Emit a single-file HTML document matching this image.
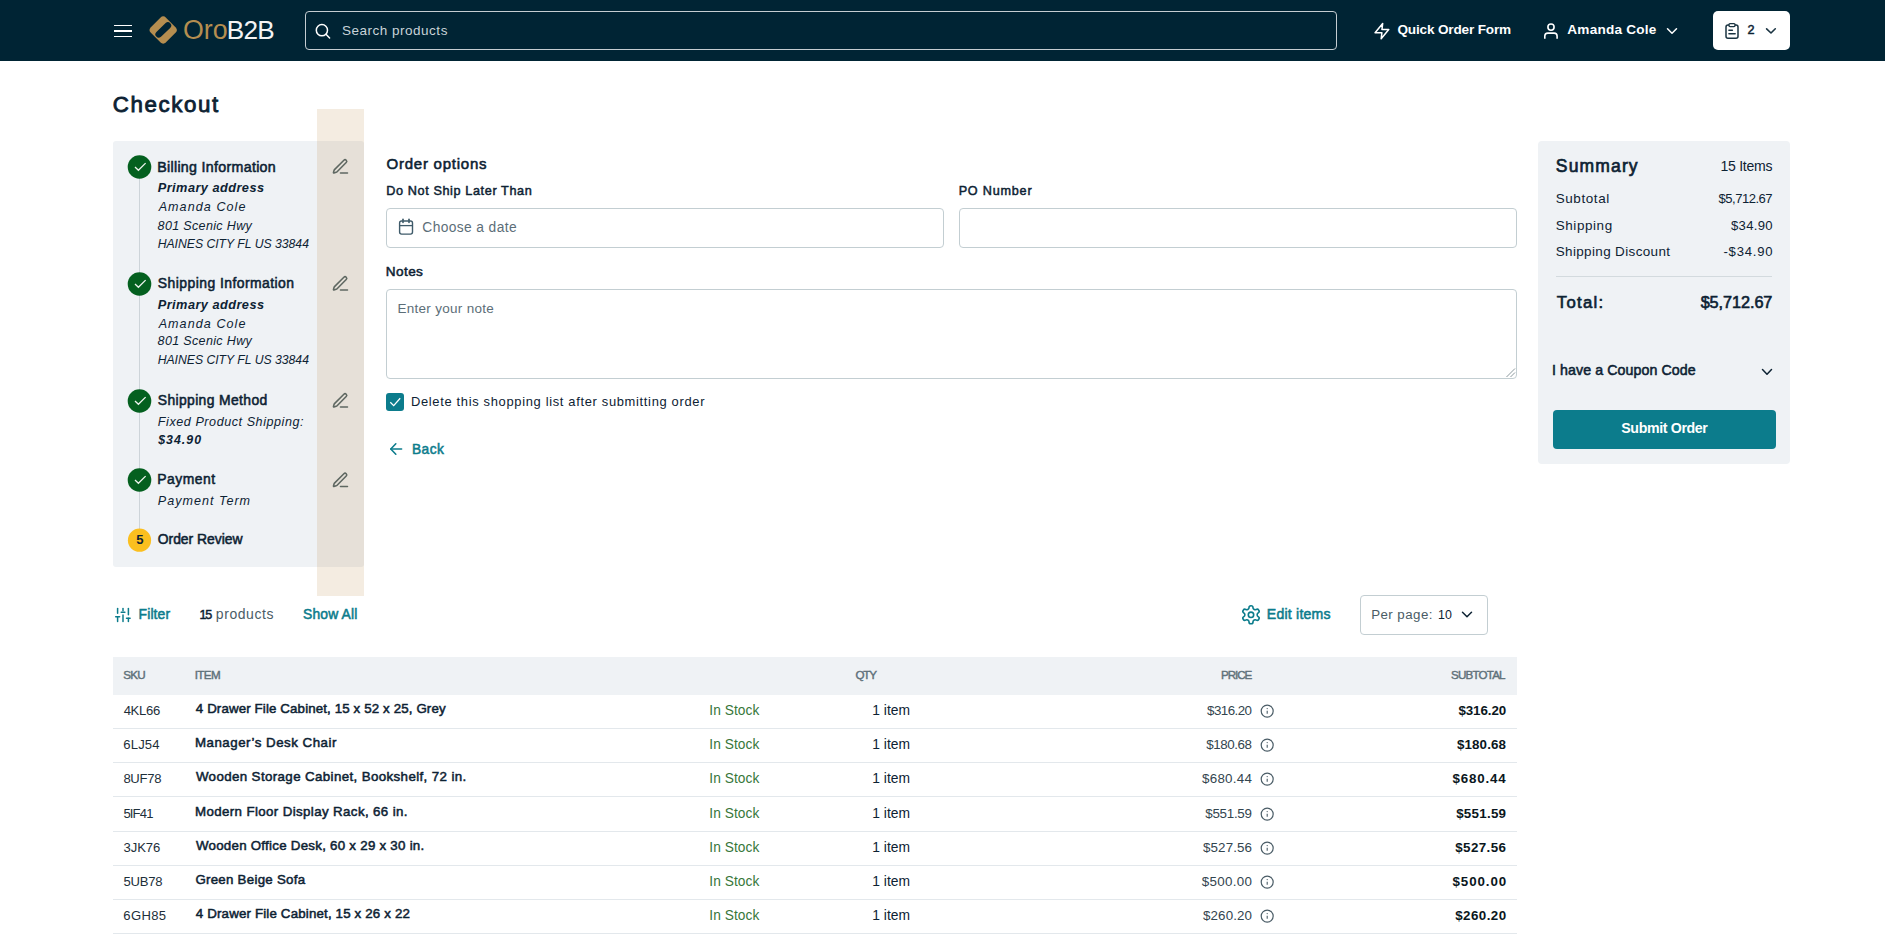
<!DOCTYPE html>
<html><head><meta charset="utf-8"><title>Checkout</title>
<style>
html,body{margin:0;padding:0;background:#fff;}
body{width:1885px;height:944px;overflow:hidden;position:relative;font-family:"Liberation Sans",sans-serif;}
.t{position:absolute;white-space:pre;}
</style></head><body>
<div style="position:absolute;left:0px;top:0px;width:1885px;height:61px;background:#002434;"></div>
<div style="position:absolute;left:114px;top:24.6px;width:18px;height:1.5px;background:#fff;"></div>
<div style="position:absolute;left:114px;top:30.2px;width:18px;height:1.5px;background:#fff;"></div>
<div style="position:absolute;left:114px;top:35.8px;width:18px;height:1.5px;background:#fff;"></div>
<div style="position:absolute;left:305px;top:11px;width:1032px;height:39px;border:1px solid #c5cdd2;border-radius:4px;box-sizing:border-box;"></div>
<div style="position:absolute;left:1713px;top:11px;width:77px;height:39px;background:#fff;border-radius:5px;"></div>
<div style="position:absolute;left:113px;top:141px;width:251px;height:425.5px;background:#eff2f5;border-radius:3px;"></div>
<div style="position:absolute;left:139px;top:178px;width:1px;height:351px;background:#cdd4d9;"></div>
<div style="position:absolute;left:386px;top:208px;width:558px;height:40px;border:1px solid #c3ced2;border-radius:4px;box-sizing:border-box;"></div>
<div style="position:absolute;left:959px;top:208px;width:558px;height:40px;border:1px solid #c3ced2;border-radius:4px;box-sizing:border-box;"></div>
<div style="position:absolute;left:386px;top:289px;width:1131px;height:90px;border:1px solid #c3ced2;border-radius:4px;box-sizing:border-box;"></div>
<div style="position:absolute;left:386px;top:393px;width:18px;height:18px;background:#0c7c8c;border-radius:3px;"></div>
<div style="position:absolute;left:1538px;top:141px;width:252px;height:323px;background:#eff2f5;border-radius:4px;"></div>
<div style="position:absolute;left:1556px;top:276px;width:216px;height:1px;background:#d3dade;"></div>
<div style="position:absolute;left:1553px;top:410px;width:223px;height:39px;background:#0c7c8c;border-radius:4px;"></div>
<div style="position:absolute;left:1360px;top:595px;width:128px;height:40px;border:1px solid #c3ced2;border-radius:4px;box-sizing:border-box;"></div>
<div style="position:absolute;left:113px;top:657px;width:1404px;height:38px;background:#eff2f5;"></div>
<div style="position:absolute;left:113px;top:728px;width:1404px;height:1px;background:#e3e8ec;"></div>
<div style="position:absolute;left:113px;top:762px;width:1404px;height:1px;background:#e3e8ec;"></div>
<div style="position:absolute;left:113px;top:796px;width:1404px;height:1px;background:#e3e8ec;"></div>
<div style="position:absolute;left:113px;top:831px;width:1404px;height:1px;background:#e3e8ec;"></div>
<div style="position:absolute;left:113px;top:865px;width:1404px;height:1px;background:#e3e8ec;"></div>
<div style="position:absolute;left:113px;top:899px;width:1404px;height:1px;background:#e3e8ec;"></div>
<div style="position:absolute;left:113px;top:933px;width:1404px;height:1px;background:#e3e8ec;"></div>
<svg style="position:absolute;left:0;top:0" width="1885" height="944" viewBox="0 0 1885 944"><g transform="translate(163.2,30) rotate(45)"><rect x="-10.7" y="-10.7" width="21.4" height="21.4" rx="4" fill="#b58e50"/></g><line x1="158.7" y1="34.3" x2="167.9" y2="25.5" stroke="#002434" stroke-width="6.6" stroke-linecap="round"/><circle cx="321.9" cy="30.2" r="5.6" fill="none" stroke="#fff" stroke-width="1.5"/><line x1="326" y1="34.3" x2="329.6" y2="38" stroke="#fff" stroke-width="1.5" stroke-linecap="round"/><g transform="translate(1372.8,22) scale(0.76)"><polygon points="13 2 3 14 12 14 11 22 21 10 12 10 13 2" fill="none" stroke="#fff" stroke-width="2" stroke-linejoin="round"/></g><circle cx="1551" cy="27.1" r="3.1" fill="none" stroke="#fff" stroke-width="1.6"/><path d="M1544.8 38.7V36.1A3 3 0 0 1 1547.8 33.1H1554.1A3 3 0 0 1 1557.1 36.1V38.7" fill="none" stroke="#fff" stroke-width="1.6"/><polyline points="1667.5,28.7 1672,33.2 1676.5,28.7" fill="none" stroke="#fff" stroke-width="1.5" stroke-linecap="round" stroke-linejoin="round"/><rect x="1726" y="24.9" width="12" height="13.3" rx="2" fill="none" stroke="#1b3442" stroke-width="1.5"/><rect x="1729" y="23.6" width="6" height="3" rx="1" fill="#fff" stroke="#1b3442" stroke-width="1.4"/><line x1="1728.9" y1="30.3" x2="1732.4" y2="30.3" stroke="#1b3442" stroke-width="1.4" stroke-linecap="round"/><line x1="1728.9" y1="33.8" x2="1735.2" y2="33.8" stroke="#1b3442" stroke-width="1.4" stroke-linecap="round"/><polyline points="1766.6,28.8 1771,33 1775.3,28.8" fill="none" stroke="#1b3442" stroke-width="1.6" stroke-linecap="round" stroke-linejoin="round"/><circle cx="139.5" cy="167" r="11.8" fill="#04601f"/><polyline points="135,167 138.4,170.3 145.6,163.1" fill="none" stroke="#eef3ee" stroke-width="1.3"/><circle cx="139.5" cy="284" r="11.8" fill="#04601f"/><polyline points="135,284 138.4,287.3 145.6,280.1" fill="none" stroke="#eef3ee" stroke-width="1.3"/><circle cx="139.5" cy="401" r="11.8" fill="#04601f"/><polyline points="135,401 138.4,404.3 145.6,397.1" fill="none" stroke="#eef3ee" stroke-width="1.3"/><circle cx="139.5" cy="480" r="11.8" fill="#04601f"/><polyline points="135,480 138.4,483.3 145.6,476.1" fill="none" stroke="#eef3ee" stroke-width="1.3"/><circle cx="139.5" cy="540.2" r="11.6" fill="#fbbf1f"/><g transform="translate(331.1,157.4) scale(0.78)"><path d="M12 20h9" fill="none" stroke="#55686e" stroke-width="2" stroke-linecap="round"/><path d="M16.376 3.622a1 1 0 0 1 3.002 3.002L7.368 18.635a2 2 0 0 1-.855.506l-2.872.838a.5.5 0 0 1-.62-.62l.838-2.872a2 2 0 0 1 .506-.854z" fill="none" stroke="#55686e" stroke-width="2" stroke-linejoin="round"/></g><g transform="translate(331.1,274.4) scale(0.78)"><path d="M12 20h9" fill="none" stroke="#55686e" stroke-width="2" stroke-linecap="round"/><path d="M16.376 3.622a1 1 0 0 1 3.002 3.002L7.368 18.635a2 2 0 0 1-.855.506l-2.872.838a.5.5 0 0 1-.62-.62l.838-2.872a2 2 0 0 1 .506-.854z" fill="none" stroke="#55686e" stroke-width="2" stroke-linejoin="round"/></g><g transform="translate(331.1,391.4) scale(0.78)"><path d="M12 20h9" fill="none" stroke="#55686e" stroke-width="2" stroke-linecap="round"/><path d="M16.376 3.622a1 1 0 0 1 3.002 3.002L7.368 18.635a2 2 0 0 1-.855.506l-2.872.838a.5.5 0 0 1-.62-.62l.838-2.872a2 2 0 0 1 .506-.854z" fill="none" stroke="#55686e" stroke-width="2" stroke-linejoin="round"/></g><g transform="translate(331.1,470.9) scale(0.78)"><path d="M12 20h9" fill="none" stroke="#55686e" stroke-width="2" stroke-linecap="round"/><path d="M16.376 3.622a1 1 0 0 1 3.002 3.002L7.368 18.635a2 2 0 0 1-.855.506l-2.872.838a.5.5 0 0 1-.62-.62l.838-2.872a2 2 0 0 1 .506-.854z" fill="none" stroke="#55686e" stroke-width="2" stroke-linejoin="round"/></g><rect x="399.6" y="221" width="12.9" height="13.1" rx="2" fill="none" stroke="#3f5b6a" stroke-width="1.4"/><line x1="399.6" y1="225.6" x2="412.5" y2="225.6" stroke="#3f5b6a" stroke-width="1.3"/><line x1="403" y1="219.3" x2="403" y2="222.5" stroke="#3f5b6a" stroke-width="1.6" stroke-linecap="round"/><line x1="409" y1="219.3" x2="409" y2="222.5" stroke="#3f5b6a" stroke-width="1.6" stroke-linecap="round"/><line x1="1506.5" y1="377" x2="1515" y2="368.5" stroke="#7d8c92" stroke-width="0.9"/><line x1="1510.5" y1="377" x2="1515" y2="372.5" stroke="#7d8c92" stroke-width="0.9"/><polyline points="390.3,402.3 393.7,405.6 400.2,398.3" fill="none" stroke="#fff" stroke-width="1.3"/><line x1="390.8" y1="449" x2="401.6" y2="449" stroke="#0c7c8c" stroke-width="1.6" stroke-linecap="round"/><polyline points="395.8,443.8 390.8,449 395.8,454.2" fill="none" stroke="#0c7c8c" stroke-width="1.6" stroke-linecap="round" stroke-linejoin="round"/><polyline points="1762.5,369.6 1767,374.2 1771.5,369.6" fill="none" stroke="#0d2233" stroke-width="1.5" stroke-linecap="round" stroke-linejoin="round"/><g fill="none" stroke="#0c7c8c" stroke-width="1.5" stroke-linecap="round"><line x1="117.6" y1="608.6" x2="117.6" y2="613.3"/><line x1="115.7" y1="616.8" x2="119.6" y2="616.8"/><line x1="117.6" y1="616.8" x2="117.6" y2="621.5"/><line x1="123" y1="608.6" x2="123" y2="610.8"/><line x1="121.2" y1="612.2" x2="124.9" y2="612.2"/><line x1="123" y1="614.9" x2="123" y2="621.5"/><line x1="128.4" y1="608.6" x2="128.4" y2="614.8"/><line x1="126.5" y1="618.2" x2="130.1" y2="618.2"/><line x1="128.4" y1="618.2" x2="128.4" y2="621.5"/></g><g transform="translate(1240.2,604) scale(0.9)" fill="none" stroke="#0c7c8c" stroke-width="1.8" stroke-linecap="round" stroke-linejoin="round"><path d="M12.22 2h-.44a2 2 0 0 0-2 2v.18a2 2 0 0 1-1 1.73l-.43.25a2 2 0 0 1-2 0l-.15-.08a2 2 0 0 0-2.73.73l-.22.38a2 2 0 0 0 .73 2.73l.15.1a2 2 0 0 1 1 1.72v.51a2 2 0 0 1-1 1.74l-.15.09a2 2 0 0 0-.73 2.73l.22.38a2 2 0 0 0 2.73.73l.15-.08a2 2 0 0 1 2 0l.43.25a2 2 0 0 1 1 1.73V20a2 2 0 0 0 2 2h.44a2 2 0 0 0 2-2v-.18a2 2 0 0 1 1-1.73l.43-.25a2 2 0 0 1 2 0l.15.08a2 2 0 0 0 2.73-.73l.22-.39a2 2 0 0 0-.73-2.73l-.15-.08a2 2 0 0 1-1-1.74v-.5a2 2 0 0 1 1-1.74l.15-.09a2 2 0 0 0 .73-2.73l-.22-.38a2 2 0 0 0-2.73-.73l-.15.08a2 2 0 0 1-2 0l-.43-.25a2 2 0 0 1-1-1.73V4a2 2 0 0 0-2-2z"/><circle cx="12" cy="12" r="3"/></g><polyline points="1462.5,612.3 1467,616.8 1471.5,612.3" fill="none" stroke="#0d2233" stroke-width="1.5" stroke-linecap="round" stroke-linejoin="round"/><circle cx="1267.2" cy="711.1" r="6" fill="none" stroke="#4a5c66" stroke-width="1.2"/><line x1="1267.2" y1="710.7" x2="1267.2" y2="713.8000000000001" stroke="#4a5c66" stroke-width="1.1"/><circle cx="1267.2" cy="708.6" r="0.65" fill="#4a5c66"/><circle cx="1267.2" cy="745.1" r="6" fill="none" stroke="#4a5c66" stroke-width="1.2"/><line x1="1267.2" y1="744.7" x2="1267.2" y2="747.8000000000001" stroke="#4a5c66" stroke-width="1.1"/><circle cx="1267.2" cy="742.6" r="0.65" fill="#4a5c66"/><circle cx="1267.2" cy="779.1" r="6" fill="none" stroke="#4a5c66" stroke-width="1.2"/><line x1="1267.2" y1="778.7" x2="1267.2" y2="781.8000000000001" stroke="#4a5c66" stroke-width="1.1"/><circle cx="1267.2" cy="776.6" r="0.65" fill="#4a5c66"/><circle cx="1267.2" cy="814.1" r="6" fill="none" stroke="#4a5c66" stroke-width="1.2"/><line x1="1267.2" y1="813.7" x2="1267.2" y2="816.8000000000001" stroke="#4a5c66" stroke-width="1.1"/><circle cx="1267.2" cy="811.6" r="0.65" fill="#4a5c66"/><circle cx="1267.2" cy="848.1" r="6" fill="none" stroke="#4a5c66" stroke-width="1.2"/><line x1="1267.2" y1="847.7" x2="1267.2" y2="850.8000000000001" stroke="#4a5c66" stroke-width="1.1"/><circle cx="1267.2" cy="845.6" r="0.65" fill="#4a5c66"/><circle cx="1267.2" cy="882.1" r="6" fill="none" stroke="#4a5c66" stroke-width="1.2"/><line x1="1267.2" y1="881.7" x2="1267.2" y2="884.8000000000001" stroke="#4a5c66" stroke-width="1.1"/><circle cx="1267.2" cy="879.6" r="0.65" fill="#4a5c66"/><circle cx="1267.2" cy="916.1" r="6" fill="none" stroke="#4a5c66" stroke-width="1.2"/><line x1="1267.2" y1="915.7" x2="1267.2" y2="918.8000000000001" stroke="#4a5c66" stroke-width="1.1"/><circle cx="1267.2" cy="913.6" r="0.65" fill="#4a5c66"/></svg>
<div class="t" style="left:183.06px;top:16.64px;font-size:26.77px;line-height:26.77px;letter-spacing:-0.067px;color:#b58e50;">Oro</div>
<div class="t" style="left:226.81px;top:17.15px;font-size:26.16px;line-height:26.16px;letter-spacing:-0.723px;color:#f4f4f4;">B2B</div>
<div class="t" style="left:342.02px;top:23.57px;font-size:13.51px;line-height:13.51px;letter-spacing:0.504px;color:#c9d3d8;">Search products</div>
<div class="t" style="left:1397.46px;top:22.50px;font-size:13.59px;line-height:13.59px;font-weight:700;letter-spacing:-0.165px;color:#ffffff;">Quick Order Form</div>
<div class="t" style="left:1567.29px;top:22.59px;font-size:13.60px;line-height:13.60px;font-weight:700;letter-spacing:0.223px;color:#ffffff;">Amanda Cole</div>
<div class="t" style="left:1747.61px;top:24.00px;font-size:12.65px;line-height:12.65px;-webkit-text-stroke:0.481px #0d2233;color:#0d2233;">2</div>
<div class="t" style="left:112.81px;top:94.12px;font-size:22.30px;line-height:22.30px;-webkit-text-stroke:0.847px #0d2233;letter-spacing:1.595px;color:#0d2233;">Checkout</div>
<div class="t" style="left:136.21px;top:532.93px;font-size:13.08px;line-height:13.08px;font-weight:700;color:#0d2233;">5</div>
<div class="t" style="left:157.23px;top:160.45px;font-size:14.24px;line-height:14.24px;-webkit-text-stroke:0.541px #0d2233;letter-spacing:0.300px;color:#0d2233;">Billing Information</div>
<div class="t" style="left:157.74px;top:182.20px;font-size:12.76px;line-height:12.76px;font-weight:700;font-style:italic;letter-spacing:0.454px;color:#0d2233;">Primary address</div>
<div class="t" style="left:158.63px;top:201.28px;font-size:12.55px;line-height:12.55px;font-style:italic;letter-spacing:1.081px;color:#0d2233;">Amanda Cole</div>
<div class="t" style="left:157.62px;top:220.28px;font-size:12.54px;line-height:12.54px;font-style:italic;letter-spacing:0.333px;color:#0d2233;">801 Scenic Hwy</div>
<div class="t" style="left:157.63px;top:238.46px;font-size:12.21px;line-height:12.21px;font-style:italic;letter-spacing:-0.008px;color:#0d2233;">HAINES CITY FL US 33844</div>
<div class="t" style="left:157.87px;top:277.20px;font-size:13.94px;line-height:13.94px;-webkit-text-stroke:0.53px #0d2233;letter-spacing:0.440px;color:#0d2233;">Shipping Information</div>
<div class="t" style="left:157.74px;top:298.90px;font-size:12.76px;line-height:12.76px;font-weight:700;font-style:italic;letter-spacing:0.454px;color:#0d2233;">Primary address</div>
<div class="t" style="left:158.63px;top:318.08px;font-size:12.55px;line-height:12.55px;font-style:italic;letter-spacing:1.081px;color:#0d2233;">Amanda Cole</div>
<div class="t" style="left:157.62px;top:334.78px;font-size:12.54px;line-height:12.54px;font-style:italic;letter-spacing:0.333px;color:#0d2233;">801 Scenic Hwy</div>
<div class="t" style="left:157.63px;top:353.96px;font-size:12.21px;line-height:12.21px;font-style:italic;letter-spacing:-0.008px;color:#0d2233;">HAINES CITY FL US 33844</div>
<div class="t" style="left:157.77px;top:394.01px;font-size:13.92px;line-height:13.92px;-webkit-text-stroke:0.529px #0d2233;letter-spacing:0.363px;color:#0d2233;">Shipping Method</div>
<div class="t" style="left:157.82px;top:416.36px;font-size:12.57px;line-height:12.57px;font-style:italic;letter-spacing:0.562px;color:#0d2233;">Fixed Product Shipping:</div>
<div class="t" style="left:158.20px;top:433.94px;font-size:12.35px;line-height:12.35px;font-weight:700;font-style:italic;letter-spacing:1.024px;color:#0d2233;">$34.90</div>
<div class="t" style="left:157.35px;top:473.21px;font-size:13.92px;line-height:13.92px;-webkit-text-stroke:0.529px #0d2233;letter-spacing:0.488px;color:#0d2233;">Payment</div>
<div class="t" style="left:157.82px;top:495.07px;font-size:12.56px;line-height:12.56px;font-style:italic;letter-spacing:1.013px;color:#0d2233;">Payment Term</div>
<div class="t" style="left:157.77px;top:533.23px;font-size:13.90px;line-height:13.90px;-webkit-text-stroke:0.528px #0d2233;letter-spacing:-0.017px;color:#0d2233;">Order Review</div>
<div class="t" style="left:386.53px;top:156.20px;font-size:15.00px;line-height:15.00px;-webkit-text-stroke:0.57px #0d2233;letter-spacing:0.764px;color:#0d2233;">Order options</div>
<div class="t" style="left:386.23px;top:185.18px;font-size:12.67px;line-height:12.67px;-webkit-text-stroke:0.481px #0d2233;letter-spacing:0.612px;color:#0d2233;">Do Not Ship Later Than</div>
<div class="t" style="left:958.63px;top:185.21px;font-size:12.62px;line-height:12.62px;-webkit-text-stroke:0.48px #0d2233;letter-spacing:0.803px;color:#0d2233;">PO Number</div>
<div class="t" style="left:422.31px;top:220.52px;font-size:13.80px;line-height:13.80px;letter-spacing:0.380px;color:#5c6e78;">Choose a date</div>
<div class="t" style="left:385.87px;top:264.69px;font-size:13.60px;line-height:13.60px;-webkit-text-stroke:0.517px #0d2233;letter-spacing:0.373px;color:#0d2233;">Notes</div>
<div class="t" style="left:397.42px;top:301.67px;font-size:13.50px;line-height:13.50px;letter-spacing:0.292px;color:#5c6e78;">Enter your note</div>
<div class="t" style="left:410.97px;top:396.26px;font-size:12.93px;line-height:12.93px;letter-spacing:0.666px;color:#0d2233;">Delete this shopping list after submitting order</div>
<div class="t" style="left:412.06px;top:442.88px;font-size:13.72px;line-height:13.72px;-webkit-text-stroke:0.521px #0c7c8c;letter-spacing:0.404px;color:#0c7c8c;">Back</div>
<div class="t" style="left:1555.86px;top:158.37px;font-size:17.52px;line-height:17.52px;-webkit-text-stroke:0.666px #0d2233;letter-spacing:1.136px;color:#0d2233;">Summary</div>
<div class="t" style="left:1720.48px;top:159.31px;font-size:14.05px;line-height:14.05px;letter-spacing:-0.264px;color:#0d2233;">15 Items</div>
<div class="t" style="left:1555.73px;top:191.79px;font-size:13.48px;line-height:13.48px;letter-spacing:0.591px;color:#0d2233;">Subtotal</div>
<div class="t" style="left:1718.57px;top:192.13px;font-size:13.08px;line-height:13.08px;letter-spacing:-0.516px;color:#0d2233;">$5,712.67</div>
<div class="t" style="left:1555.73px;top:218.59px;font-size:13.48px;line-height:13.48px;letter-spacing:0.577px;color:#0d2233;">Shipping</div>
<div class="t" style="left:1731.07px;top:218.93px;font-size:13.08px;line-height:13.08px;letter-spacing:0.285px;color:#0d2233;">$34.90</div>
<div class="t" style="left:1555.73px;top:244.59px;font-size:13.48px;line-height:13.48px;letter-spacing:0.359px;color:#0d2233;">Shipping Discount</div>
<div class="t" style="left:1723.48px;top:244.93px;font-size:13.08px;line-height:13.08px;letter-spacing:0.783px;color:#0d2233;">-$34.90</div>
<div class="t" style="left:1556.78px;top:294.63px;font-size:16.73px;line-height:16.73px;-webkit-text-stroke:0.636px #0d2233;letter-spacing:1.282px;color:#0d2233;">Total:</div>
<div class="t" style="left:1700.65px;top:294.02px;font-size:16.28px;line-height:16.28px;-webkit-text-stroke:0.619px #0d2233;letter-spacing:-0.073px;color:#0d2233;">$5,712.67</div>
<div class="t" style="left:1551.99px;top:363.28px;font-size:14.20px;line-height:14.20px;-webkit-text-stroke:0.54px #0d2233;letter-spacing:0.084px;color:#0d2233;">I have a Coupon Code</div>
<div class="t" style="left:1621.27px;top:421.28px;font-size:14.20px;line-height:14.20px;font-weight:700;letter-spacing:-0.368px;color:#ffffff;">Submit Order</div>
<div class="t" style="left:138.55px;top:608.32px;font-size:13.91px;line-height:13.91px;-webkit-text-stroke:0.529px #0c7c8c;letter-spacing:0.128px;color:#0c7c8c;">Filter</div>
<div class="t" style="left:199.53px;top:609.43px;font-size:12.60px;line-height:12.60px;-webkit-text-stroke:0.479px #0d2233;letter-spacing:-1.153px;color:#0d2233;">15</div>
<div class="t" style="left:215.86px;top:607.26px;font-size:13.99px;line-height:13.99px;letter-spacing:0.554px;color:#4a5c66;">products</div>
<div class="t" style="left:302.97px;top:608.37px;font-size:13.86px;line-height:13.86px;-webkit-text-stroke:0.527px #0c7c8c;letter-spacing:0.176px;color:#0c7c8c;">Show All</div>
<div class="t" style="left:1266.84px;top:606.97px;font-size:14.09px;line-height:14.09px;-webkit-text-stroke:0.535px #0c7c8c;letter-spacing:0.212px;color:#0c7c8c;">Edit items</div>
<div class="t" style="left:1371.23px;top:607.62px;font-size:13.32px;line-height:13.32px;letter-spacing:0.434px;color:#4a5c66;">Per page:</div>
<div class="t" style="left:1438.01px;top:609.40px;font-size:12.40px;line-height:12.40px;color:#0d2233;">10</div>
<div class="t" style="left:123.24px;top:669.16px;font-size:11.63px;line-height:11.63px;-webkit-text-stroke:0.442px #5f717a;letter-spacing:-0.742px;color:#5f717a;">SKU</div>
<div class="t" style="left:194.67px;top:669.16px;font-size:11.63px;line-height:11.63px;-webkit-text-stroke:0.442px #5f717a;letter-spacing:-0.585px;color:#5f717a;">ITEM</div>
<div class="t" style="left:855.54px;top:669.16px;font-size:11.63px;line-height:11.63px;-webkit-text-stroke:0.442px #5f717a;letter-spacing:-1.233px;color:#5f717a;">QTY</div>
<div class="t" style="left:1220.99px;top:669.16px;font-size:11.63px;line-height:11.63px;-webkit-text-stroke:0.442px #5f717a;letter-spacing:-1.053px;color:#5f717a;">PRICE</div>
<div class="t" style="left:1451.04px;top:669.16px;font-size:11.63px;line-height:11.63px;-webkit-text-stroke:0.442px #5f717a;letter-spacing:-0.821px;color:#5f717a;">SUBTOTAL</div>
<div class="t" style="left:123.64px;top:703.93px;font-size:13.08px;line-height:13.08px;letter-spacing:-0.305px;color:#1d2f3a;">4KL66</div>
<div class="t" style="left:195.79px;top:701.73px;font-size:13.31px;line-height:13.31px;-webkit-text-stroke:0.506px #0d2233;letter-spacing:0.130px;color:#0d2233;">4 Drawer File Cabinet, 15 x 52 x 25, Grey</div>
<div class="t" style="left:709.27px;top:704.40px;font-size:13.71px;line-height:13.71px;letter-spacing:0.065px;color:#37773a;">In Stock</div>
<div class="t" style="left:872.29px;top:704.28px;font-size:13.84px;line-height:13.84px;letter-spacing:0.019px;color:#0d2233;">1 item</div>
<div class="t" style="left:1207.07px;top:703.68px;font-size:13.37px;line-height:13.37px;letter-spacing:-0.567px;color:#33454f;">$316.20</div>
<div class="t" style="left:1458.43px;top:703.68px;font-size:13.37px;line-height:13.37px;font-weight:700;letter-spacing:-0.095px;color:#0a1620;">$316.20</div>
<div class="t" style="left:123.25px;top:737.93px;font-size:13.08px;line-height:13.08px;letter-spacing:0.166px;color:#1d2f3a;">6LJ54</div>
<div class="t" style="left:194.99px;top:735.73px;font-size:13.31px;line-height:13.31px;-webkit-text-stroke:0.506px #0d2233;letter-spacing:0.507px;color:#0d2233;">Manager’s Desk Chair</div>
<div class="t" style="left:709.27px;top:738.40px;font-size:13.71px;line-height:13.71px;letter-spacing:0.065px;color:#37773a;">In Stock</div>
<div class="t" style="left:872.29px;top:738.28px;font-size:13.84px;line-height:13.84px;letter-spacing:0.019px;color:#0d2233;">1 item</div>
<div class="t" style="left:1206.27px;top:737.68px;font-size:13.37px;line-height:13.37px;letter-spacing:-0.434px;color:#33454f;">$180.68</div>
<div class="t" style="left:1456.93px;top:737.68px;font-size:13.37px;line-height:13.37px;font-weight:700;letter-spacing:0.133px;color:#0a1620;">$180.68</div>
<div class="t" style="left:123.38px;top:771.93px;font-size:13.08px;line-height:13.08px;letter-spacing:-0.299px;color:#1d2f3a;">8UF78</div>
<div class="t" style="left:195.92px;top:769.72px;font-size:13.33px;line-height:13.33px;-webkit-text-stroke:0.507px #0d2233;letter-spacing:0.373px;color:#0d2233;">Wooden Storage Cabinet, Bookshelf, 72 in.</div>
<div class="t" style="left:709.27px;top:772.40px;font-size:13.71px;line-height:13.71px;letter-spacing:0.065px;color:#37773a;">In Stock</div>
<div class="t" style="left:872.29px;top:772.28px;font-size:13.84px;line-height:13.84px;letter-spacing:0.019px;color:#0d2233;">1 item</div>
<div class="t" style="left:1202.07px;top:771.68px;font-size:13.37px;line-height:13.37px;letter-spacing:0.244px;color:#33454f;">$680.44</div>
<div class="t" style="left:1452.43px;top:771.68px;font-size:13.37px;line-height:13.37px;font-weight:700;letter-spacing:0.816px;color:#0a1620;">$680.44</div>
<div class="t" style="left:123.38px;top:806.93px;font-size:13.08px;line-height:13.08px;letter-spacing:-0.853px;color:#1d2f3a;">5IF41</div>
<div class="t" style="left:194.99px;top:804.73px;font-size:13.31px;line-height:13.31px;-webkit-text-stroke:0.506px #0d2233;letter-spacing:0.383px;color:#0d2233;">Modern Floor Display Rack, 66 in.</div>
<div class="t" style="left:709.27px;top:807.40px;font-size:13.71px;line-height:13.71px;letter-spacing:0.065px;color:#37773a;">In Stock</div>
<div class="t" style="left:872.29px;top:807.28px;font-size:13.84px;line-height:13.84px;letter-spacing:0.019px;color:#0d2233;">1 item</div>
<div class="t" style="left:1205.27px;top:806.68px;font-size:13.37px;line-height:13.37px;letter-spacing:-0.267px;color:#33454f;">$551.59</div>
<div class="t" style="left:1456.13px;top:806.68px;font-size:13.37px;line-height:13.37px;font-weight:700;letter-spacing:0.266px;color:#0a1620;">$551.59</div>
<div class="t" style="left:123.38px;top:840.93px;font-size:13.08px;line-height:13.08px;letter-spacing:-0.018px;color:#1d2f3a;">3JK76</div>
<div class="t" style="left:195.92px;top:838.72px;font-size:13.32px;line-height:13.32px;-webkit-text-stroke:0.506px #0d2233;letter-spacing:0.258px;color:#0d2233;">Wooden Office Desk, 60 x 29 x 30 in.</div>
<div class="t" style="left:709.27px;top:841.40px;font-size:13.71px;line-height:13.71px;letter-spacing:0.065px;color:#37773a;">In Stock</div>
<div class="t" style="left:872.29px;top:841.28px;font-size:13.84px;line-height:13.84px;letter-spacing:0.019px;color:#0d2233;">1 item</div>
<div class="t" style="left:1203.07px;top:840.68px;font-size:13.37px;line-height:13.37px;letter-spacing:0.099px;color:#33454f;">$527.56</div>
<div class="t" style="left:1455.23px;top:840.68px;font-size:13.37px;line-height:13.37px;font-weight:700;letter-spacing:0.416px;color:#0a1620;">$527.56</div>
<div class="t" style="left:123.38px;top:874.93px;font-size:13.08px;line-height:13.08px;letter-spacing:-0.221px;color:#1d2f3a;">5UB78</div>
<div class="t" style="left:195.39px;top:872.75px;font-size:13.29px;line-height:13.29px;-webkit-text-stroke:0.505px #0d2233;letter-spacing:0.273px;color:#0d2233;">Green Beige Sofa</div>
<div class="t" style="left:709.27px;top:875.40px;font-size:13.71px;line-height:13.71px;letter-spacing:0.065px;color:#37773a;">In Stock</div>
<div class="t" style="left:872.29px;top:875.28px;font-size:13.84px;line-height:13.84px;letter-spacing:0.019px;color:#0d2233;">1 item</div>
<div class="t" style="left:1201.67px;top:874.68px;font-size:13.37px;line-height:13.37px;letter-spacing:0.333px;color:#33454f;">$500.00</div>
<div class="t" style="left:1452.53px;top:874.68px;font-size:13.37px;line-height:13.37px;font-weight:700;letter-spacing:0.888px;color:#0a1620;">$500.00</div>
<div class="t" style="left:123.25px;top:908.93px;font-size:13.08px;line-height:13.08px;letter-spacing:0.352px;color:#1d2f3a;">6GH85</div>
<div class="t" style="left:195.79px;top:906.73px;font-size:13.32px;line-height:13.32px;-webkit-text-stroke:0.506px #0d2233;letter-spacing:0.160px;color:#0d2233;">4 Drawer File Cabinet, 15 x 26 x 22</div>
<div class="t" style="left:709.27px;top:909.40px;font-size:13.71px;line-height:13.71px;letter-spacing:0.065px;color:#37773a;">In Stock</div>
<div class="t" style="left:872.29px;top:909.28px;font-size:13.84px;line-height:13.84px;letter-spacing:0.019px;color:#0d2233;">1 item</div>
<div class="t" style="left:1203.07px;top:908.68px;font-size:13.37px;line-height:13.37px;letter-spacing:0.099px;color:#33454f;">$260.20</div>
<div class="t" style="left:1455.23px;top:908.68px;font-size:13.37px;line-height:13.37px;font-weight:700;letter-spacing:0.438px;color:#0a1620;">$260.20</div>
<div style="position:absolute;left:317px;top:109px;width:47px;height:487px;background:rgba(165,105,15,0.125);"></div>
</body></html>
